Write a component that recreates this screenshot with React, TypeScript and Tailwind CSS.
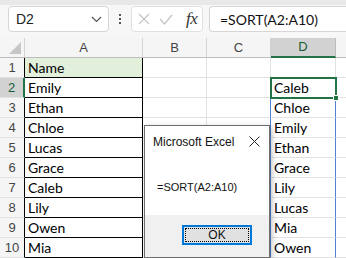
import React from "react";

const names = ["Emily", "Ethan", "Chloe", "Lucas", "Grace", "Caleb", "Lily", "Owen", "Mia"];
const sorted = [...names].sort();

function RowHeader({ n }: { n: number }) {
    const active = n === 2;
    return (
        <div
            className={
                "h-[20px] border-b border-[#e1e1e1] flex items-center justify-center text-[13px] font-['Liberation_Sans'] " +
                (active ? "bg-[#d2d2d2] text-[#185c37] border-r-2 border-r-[#217346]" : "bg-[#f5f5f5] text-[#444] border-r border-r-black")
            }
        >
            {n}
        </div>
    );
}

export default function App() {
    const rows = Array.from({ length: 10 }, (_, i) => i + 1);

    return (
        <div className="relative w-[346px] h-[258px] overflow-hidden bg-white font-['Lato',sans-serif] text-black">
            {/* formula bar */}
            <div className="h-[5px] bg-[#e8e8e8]" />
            <div className="h-[33px] bg-[#f7f7f7] flex items-start pt-[1px]">
                <div className="ml-[8px] w-[101px] h-[26px] bg-white border border-[#d6d6d6] rounded-[4px] flex items-center pl-[7px] pr-[6px]">
                    <span className="text-[14px] font-['Liberation_Sans'] text-[#222] flex-1">D2</span>
                    <svg width="11" height="7" viewBox="0 0 11 7">
                        <path d="M1 1 L5.5 5.5 L10 1" stroke="#555" strokeWidth="1.2" fill="none" />
                    </svg>
                </div>
                <div className="w-[22px] h-[26px] flex flex-col items-center justify-center gap-[2px]">
                    <div className="w-[2px] h-[2px] bg-[#555]" />
                    <div className="w-[2px] h-[2px] bg-[#555]" />
                    <div className="w-[2px] h-[2px] bg-[#555]" />
                </div>
                <div className="w-[72px] h-[26px] bg-white border border-[#e0e0e0] rounded-[4px] flex items-center pl-[6px]">
                    <svg width="12" height="12" viewBox="0 0 12 12">
                        <path d="M1 1 L11 11 M11 1 L1 11" stroke="#c4c4c4" strokeWidth="1.2" />
                    </svg>
                    <svg width="14" height="11" viewBox="0 0 14 11" className="ml-[9px]">
                        <path d="M1 5 L5.5 10 L13 1" stroke="#c4c4c4" strokeWidth="1.2" fill="none" />
                    </svg>
                    <span className="ml-[13px] text-[17px] leading-[20px] italic font-['Liberation_Serif'] text-[#333] tracking-[-0.5px]">fx</span>
                </div>
                <div className="ml-[6px] flex-1 h-[26px] bg-white border border-[#d6d6d6] rounded-l-[4px] border-r-0 flex items-center pl-[10px]">
                    <span className="text-[14px] text-[#111]">=SORT(A2:A10)</span>
                </div>
            </div>

            {/* sheet */}
            <div className="grid grid-cols-[25px_118px_64px_64px_65px_10px] auto-rows-[20px]">
                <div className="h-[20px] bg-[#f5f5f5] border-b border-[#bdbdbd] border-r border-r-[#d4d4d4] relative">
                    <div className="absolute right-[3px] bottom-[3px] w-0 h-0 border-l-[12px] border-l-transparent border-b-[12px] border-b-[#c6c6c6]" />
                </div>
                {["A", "B", "C"].map((c) => (
                    <div key={c} className="h-[20px] bg-[#f5f5f5] border-b border-[#bdbdbd] border-r border-r-[#d4d4d4] flex items-center justify-center text-[13px] font-['Liberation_Sans'] text-[#444]">
                        {c}
                    </div>
                ))}
                <div className="h-[20px] bg-[#d2d2d2] border-b-2 border-[#217346] border-r border-r-[#bdbdbd] flex items-center justify-center text-[13px] font-['Liberation_Sans'] text-[#185c37]">
                    D
                </div>
                <div className="h-[20px] bg-[#f5f5f5] border-b border-[#bdbdbd]" />

                {rows.map((r) => (
                    <React.Fragment key={r}>
                        <RowHeader n={r} />
                        <div
                            className={
                                "h-[20px] border-b border-r border-black flex items-end pl-[3px] text-[14px] leading-[18px] " +
                                (r === 1 ? "bg-[#e2efda]" : "")
                            }
                        >
                            {r === 1 ? "Name" : names[r - 2]}
                        </div>
                        <div className="h-[20px] border-b border-r border-[#e1e1e1]" />
                        <div className={"h-[20px] border-b border-[#e1e1e1] " + (r >= 2 ? "border-r border-r-[#4f7fcf]" : "border-r")} />
                        <div className={"h-[20px] border-b flex items-end pl-[3px] text-[14px] leading-[18px] " + (r >= 2 ? "border-r border-r-[#4f7fcf] border-b-[#e1e1e1]" : "border-r border-[#e1e1e1]")}>
                            {r >= 2 ? sorted[r - 2] : ""}
                        </div>
                        <div className="h-[20px] border-b border-[#e1e1e1]" />
                    </React.Fragment>
                ))}
            </div>

            {/* active cell */}
            <div className="absolute left-[270px] top-[77px] w-[67px] h-[22px] border-2 border-[#217346]" />
            <div className="absolute left-[333px] top-[95px] w-[6px] h-[6px] bg-[#217346] border border-white" />

            {/* message box */}
            <div className="absolute left-[144px] top-[125px] w-[126px] h-[133px] border border-[#6e6e6e] bg-[#f0f0f0] shadow-[2px_2px_6px_rgba(0,0,0,0.25)] flex flex-col font-['Liberation_Sans']">
                <div className="h-[89px] bg-white flex flex-col">
                    <div className="flex items-center justify-between pl-[8px] pr-[9px] pt-[3px] h-[28px]">
                        <span className="text-[12px] text-[#111]">Microsoft Excel</span>
                        <svg width="11" height="11" viewBox="0 0 11 11">
                            <path d="M0.5 0.5 L10.5 10.5 M10.5 0.5 L0.5 10.5" stroke="#222" strokeWidth="1" />
                        </svg>
                    </div>
                    <div className="pl-[12px] pt-[25px] text-[11px] text-[#111]">=SORT(A2:A10)</div>
                </div>
                <div className="flex-1 flex justify-end pr-[17px] pt-[10px]">
                    <div className="w-[70px] h-[20px] border-2 border-[#0078d7] bg-[#e1e1e1] p-[1px]">
                        <div className="w-full h-full border border-dotted border-black flex items-center justify-center text-[12px] text-[#111]">
                            OK
                        </div>
                    </div>
                </div>
            </div>
        </div>
    );
}
